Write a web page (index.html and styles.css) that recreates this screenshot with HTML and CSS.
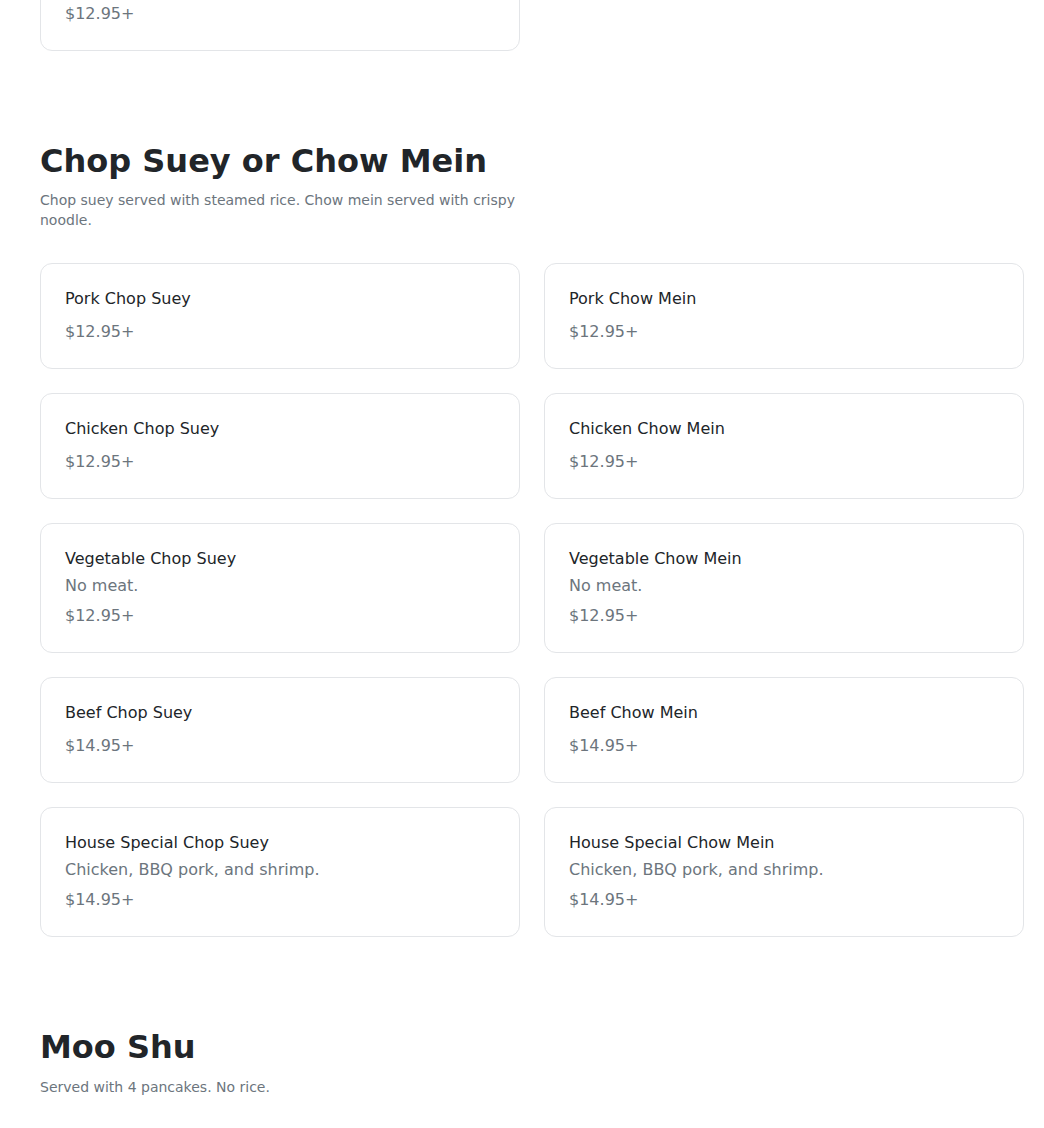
FILE: index.html
```html
<!DOCTYPE html>
<html lang="en">
<head>
<meta charset="utf-8">
<title>Menu</title>
<link rel="stylesheet" href="styles.css">
</head>
<body>
<main class="menu">
  <section class="section section-prev">
    <div class="grid">
      <div class="card">
        <div class="item-name">House Special Egg Foo Young</div>
        <div class="item-price">$12.95+</div>
      </div>
    </div>
  </section>

  <section class="section">
    <h2 class="section-title">Chop Suey or Chow Mein</h2>
    <p class="section-desc">Chop suey served with steamed rice. Chow mein served with crispy noodle.</p>
    <div class="grid">
      <div class="card">
        <div class="item-name">Pork Chop Suey</div>
        <div class="item-price">$12.95+</div>
      </div>
      <div class="card">
        <div class="item-name">Pork Chow Mein</div>
        <div class="item-price">$12.95+</div>
      </div>
      <div class="card">
        <div class="item-name">Chicken Chop Suey</div>
        <div class="item-price">$12.95+</div>
      </div>
      <div class="card">
        <div class="item-name">Chicken Chow Mein</div>
        <div class="item-price">$12.95+</div>
      </div>
      <div class="card">
        <div class="item-name">Vegetable Chop Suey</div>
        <div class="item-desc">No meat.</div>
        <div class="item-price">$12.95+</div>
      </div>
      <div class="card">
        <div class="item-name">Vegetable Chow Mein</div>
        <div class="item-desc">No meat.</div>
        <div class="item-price">$12.95+</div>
      </div>
      <div class="card">
        <div class="item-name">Beef Chop Suey</div>
        <div class="item-price">$14.95+</div>
      </div>
      <div class="card">
        <div class="item-name">Beef Chow Mein</div>
        <div class="item-price">$14.95+</div>
      </div>
      <div class="card">
        <div class="item-name">House Special Chop Suey</div>
        <div class="item-desc">Chicken, BBQ pork, and shrimp.</div>
        <div class="item-price">$14.95+</div>
      </div>
      <div class="card">
        <div class="item-name">House Special Chow Mein</div>
        <div class="item-desc">Chicken, BBQ pork, and shrimp.</div>
        <div class="item-price">$14.95+</div>
      </div>
    </div>
  </section>

  <section class="section">
    <h2 class="section-title">Moo Shu</h2>
    <p class="section-desc">Served with 4 pancakes. No rice.</p>
  </section>
</main>
</body>
</html>
```

FILE: styles.css
```css
* {
  box-sizing: border-box;
}

html, body {
  margin: 0;
  padding: 0;
  background: #ffffff;
}

body {
  font-family: "DejaVu Sans", "Liberation Sans", sans-serif;
  color: #212529;
}

.menu {
  width: 984px;
  margin-left: 40px;
  display: flex;
  flex-direction: column;
  gap: 91px;
}

.section-prev {
  margin-top: -55px;
}

.section-title {
  margin: 0;
  font-size: 32px;
  line-height: 1.2;
  font-weight: 700;
  color: #212529;
}

.section-desc {
  margin: 10px 0 0;
  max-width: 480px;
  font-size: 14px;
  line-height: 20px;
  color: #6c757d;
}

.section .grid {
  margin-top: 33px;
}

.section-prev .grid {
  margin-top: 0;
}

.grid {
  display: grid;
  grid-template-columns: 1fr 1fr;
  gap: 24px;
}

.card {
  border: 1px solid #e3e5e8;
  border-radius: 12px;
  padding: 24px;
  display: flex;
  flex-direction: column;
  background: #fff;
}

.item-name {
  font-size: 16px;
  line-height: 22px;
  color: #212529;
}

.item-desc {
  font-size: 16px;
  line-height: 24px;
  color: #6c757d;
  margin-top: 4px;
}

.item-price {
  font-size: 16px;
  line-height: 24px;
  color: #6c757d;
  margin-top: 10px;
}

.item-desc + .item-price {
  margin-top: 6px;
}
```
